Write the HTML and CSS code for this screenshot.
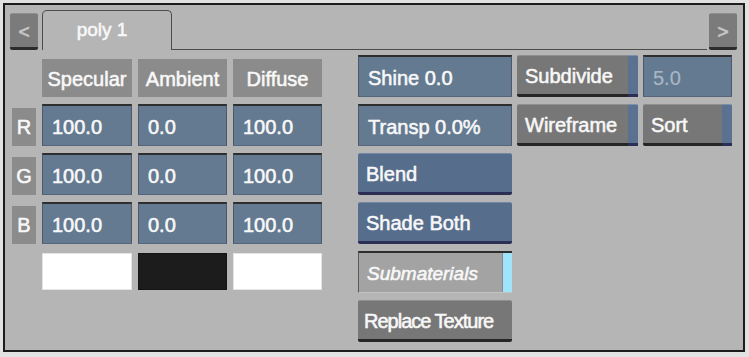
FILE: index.html
```html
<!DOCTYPE html>
<html lang="en">
<head>
    <meta charset="UTF-8">
    <title>Material - poly 1</title>
    <link rel="stylesheet" href="styles.css">
</head>
<body>
    <div class="panel">
        <div class="tabbar">
            <div class="arrow">&lt;</div>
            <div class="tab">poly 1</div>
            <div class="tab-line"></div>
            <div class="arrow">&gt;</div>
        </div>
        <div class="main">
            <div class="colors">
                <div></div>
                <div class="head">Specular</div>
                <div class="head">Ambient</div>
                <div class="head">Diffuse</div>

                <div class="chan">R</div>
                <div class="field">100.0</div>
                <div class="field">0.0</div>
                <div class="field">100.0</div>

                <div class="chan">G</div>
                <div class="field">100.0</div>
                <div class="field">0.0</div>
                <div class="field">100.0</div>

                <div class="chan">B</div>
                <div class="field">100.0</div>
                <div class="field">0.0</div>
                <div class="field">100.0</div>

                <div></div>
                <div class="swatch white"></div>
                <div class="swatch black"></div>
                <div class="swatch white"></div>
            </div>

            <div class="props">
                <div class="field">Shine 0.0</div>
                <div class="btn toggle">Subdivide</div>
                <div class="field dim">5.0</div>

                <div class="field">Transp 0.0%</div>
                <div class="btn toggle">Wireframe</div>
                <div class="btn toggle">Sort</div>

                <div class="btn blue first">Blend</div>
                <div class="btn blue first">Shade Both</div>
                <div class="sub first">Submaterials</div>
                <div class="btn first tight">Replace Texture</div>
            </div>
        </div>
    </div>
</body>
</html>
```

FILE: styles.css
```css
body {
    margin: 0;
    background-color: #e2e2e2;
    font-family: "Liberation Sans", Arial, sans-serif;
    font-size: 20px;
    color: #f8f8f8;
    -webkit-text-stroke: 0.55px #f8f8f8;
}
.panel {
    box-sizing: border-box;
    width: 742px;
    height: 349px;
    margin: 3px;
    border: 2px solid #1c1c1c;
    background-color: #b5b5b5;
}
.tabbar {
    display: flex;
    align-items: flex-end;
    height: 40px;
    padding: 5px 6px 0 5px;
}
.arrow {
    box-sizing: border-box;
    width: 28px;
    height: 37px;
    background-color: #7b7b7b;
    border-top: 1px solid #8e8e8e;
    border-bottom: 3px solid #2c2c2c;
    border-radius: 2px;
    color: #c6c6c6;
    -webkit-text-stroke: 0.8px #c6c6c6;
    font-size: 19px;
    display: flex;
    align-items: center;
    justify-content: center;
    padding-top: 2px;
}
.tab {
    box-sizing: border-box;
    width: 130px;
    height: 40px;
    margin-left: 4px;
    border: 1px solid #4c4c4c;
    border-bottom: none;
    border-radius: 5px 5px 0 0;
    text-align: center;
    padding: 8px 10px 0 0;
    font-size: 19px;
}
.tab-line {
    flex: 1;
    height: 1px;
    background-color: #4c4c4c;
    margin-right: 2px;
}
.main {
    display: flex;
    align-items: flex-start;
    gap: 36px;
    padding-left: 7px;
}
.colors {
    display: grid;
    grid-template-columns: 24px 90px 89px 89px;
    grid-template-rows: 38px 42px 42px 42px 39px;
    column-gap: 6px;
    row-gap: 7px;
    margin-top: 9px;
}
.head {
    background-color: #8b8b8b;
    display: flex;
    align-items: center;
    justify-content: center;
    padding-top: 2px;
}
.chan {
    align-self: end;
    height: 38px;
    background-color: #8b8b8b;
    display: flex;
    align-items: center;
    justify-content: center;
}
.field {
    box-sizing: border-box;
    background-color: #647a91;
    border-top: 2px solid #2e2e2e;
    border-left: 1px solid #4a5868;
    border-right: 1px solid #4a5868;
    border-bottom: 1px solid #56667a;
    display: flex;
    align-items: center;
    padding: 3px 0 0 9px;
}
.field.dim {
    color: #a9b6c4;
    -webkit-text-stroke: 0.2px #a9b6c4;
}
.swatch {
    box-sizing: border-box;
    margin-top: 2px;
}
.swatch.white {
    background-color: #ffffff;
    border: 1px solid #e4e4e4;
}
.swatch.black {
    background-color: #1c1c1c;
    border: 1px solid #141414;
}
.props {
    display: grid;
    grid-template-columns: 154px 121px 89px;
    grid-auto-rows: 42px;
    column-gap: 5px;
    row-gap: 7px;
    margin-top: 5px;
}
.first {
    grid-column: 1;
}
.btn {
    box-sizing: border-box;
    position: relative;
    background-color: #777777;
    border-top: 1px solid #8f8f8f;
    border-bottom: 3px solid #262626;
    border-radius: 2px;
    display: flex;
    align-items: center;
    padding: 2px 0 0 8px;
}
.btn.blue {
    background-color: #566d8c;
    border-top: 1px solid #7388a5;
    border-bottom: 3px solid #2c2f55;
}
.btn.tight {
    padding-left: 6px;
    letter-spacing: -1px;
}
/* blue state strip on the right edge of toggles */
.btn.toggle::after {
    content: "";
    position: absolute;
    top: -1px;
    right: 0;
    bottom: -3px;
    width: 10px;
    background-color: #5a7192;
    border-top: 1px solid #7a90ad;
    border-bottom: 3px solid #2c2f55;
    border-radius: 2px 2px 0 0;
    box-sizing: border-box;
}
.sub {
    box-sizing: border-box;
    position: relative;
    background-color: #a3a3a3;
    border-top: 2px solid #2e2e2e;
    border-left: 1px solid #5a5a5a;
    border-bottom: 1px solid #c4c4c4;
    display: flex;
    align-items: center;
    padding: 2px 0 0 8px;
    font-style: italic;
    font-size: 19px;
}
.sub::after {
    content: "";
    position: absolute;
    top: 0;
    right: 0;
    bottom: 0;
    width: 9px;
    background-color: #a0e4fb;
    border-left: 1px solid #8a8a8a;
}
```
